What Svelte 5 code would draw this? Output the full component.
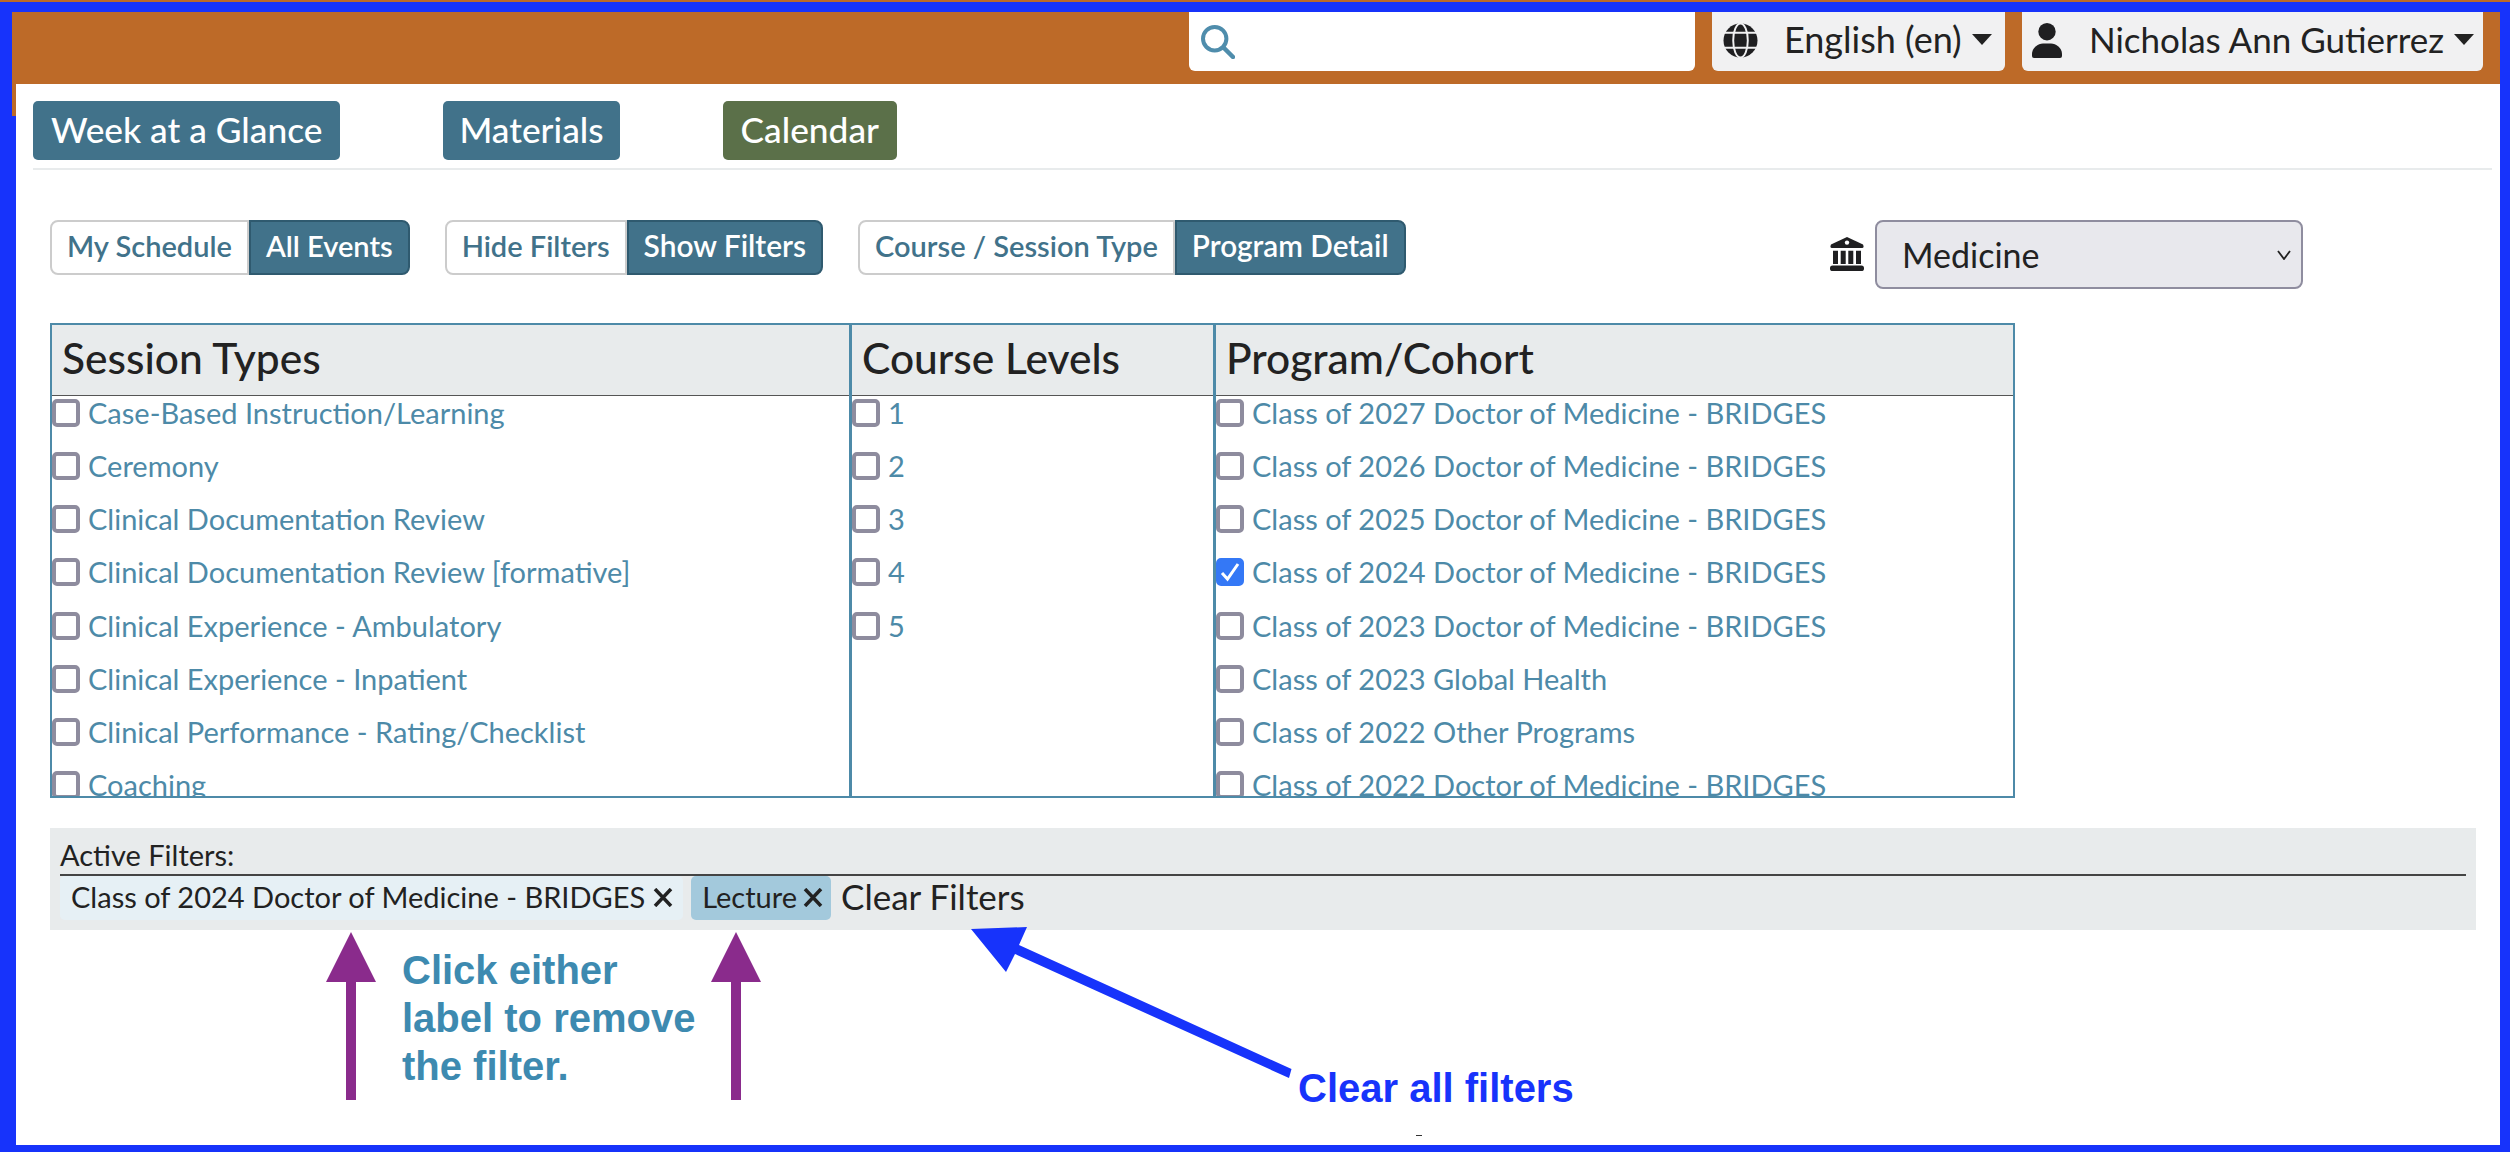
<script>
  const sessionTypes = [
    'Case-Based Instruction/Learning',
    'Ceremony',
    'Clinical Documentation Review',
    'Clinical Documentation Review [formative]',
    'Clinical Experience - Ambulatory',
    'Clinical Experience - Inpatient',
    'Clinical Performance - Rating/Checklist',
    'Coaching'
  ];
  const levels = ['1', '2', '3', '4', '5'];
  const cohorts = [
    'Class of 2027 Doctor of Medicine - BRIDGES',
    'Class of 2026 Doctor of Medicine - BRIDGES',
    'Class of 2025 Doctor of Medicine - BRIDGES',
    'Class of 2024 Doctor of Medicine - BRIDGES',
    'Class of 2023 Doctor of Medicine - BRIDGES',
    'Class of 2023 Global Health',
    'Class of 2022 Other Programs',
    'Class of 2022 Doctor of Medicine - BRIDGES'
  ];
  const columns = [
    { title: 'Session Types', items: sessionTypes },
    { title: 'Course Levels', items: levels },
    { title: 'Program/Cohort', items: cohorts }
  ];
  const toggles = [
    ['My Schedule', 'All Events'],
    ['Hide Filters', 'Show Filters'],
    ['Course / Session Type', 'Program Detail']
  ];
  const checked = 'Class of 2024 Doctor of Medicine - BRIDGES';
</script>

<div class="frame">
  <header class="topbar">
    <div class="search">
      <svg class="search-icon" viewBox="0 0 34 34" aria-hidden="true">
        <circle cx="13.7" cy="13.7" r="11.7" fill="none" stroke="#4f8dac" stroke-width="4" />
        <path d="M22.5 22.5 L32 32" stroke="#4f8dac" stroke-width="4.5" stroke-linecap="round" />
      </svg>
    </div>
    <button class="menu lang">
      <svg class="globe" viewBox="0 0 36 36" aria-hidden="true">
        <circle cx="18" cy="18" r="17.5" fill="#1f1f21" />
        <g fill="none" stroke="#f1f1f2" stroke-width="2">
          <ellipse cx="18" cy="18" rx="7.5" ry="17.5" />
          <path d="M0 10 H36 M0 25.5 H36" />
        </g>
      </svg>
      <span class="menu-text">English (en)</span>
      <span class="caret"></span>
    </button>
    <button class="menu user">
      <svg class="person" viewBox="0 0 30 35" aria-hidden="true">
        <circle cx="15" cy="8.7" r="8.7" fill="#1f1f21" />
        <path d="M0 33 V31 C0 25 6 20.5 11 20.5 H19 C24 20.5 30 25 30 31 V33 Q30 35 28 35 H2 Q0 35 0 33 Z" fill="#1f1f21" />
      </svg>
      <span class="menu-text">Nicholas Ann Gutierrez</span>
      <span class="caret"></span>
    </button>
  </header>

  <main class="page">
    <nav class="tabs">
      <button class="tab">Week at a Glance</button>
      <button class="tab slim">Materials</button>
      <button class="tab green">Calendar</button>
    </nav>
    <div class="divider"></div>

    <div class="toolbar">
      {#each toggles as pair}
        <div class="toggle">
          <button class="t-off">{pair[0]}</button>
          <button class="t-on">{pair[1]}</button>
        </div>
      {/each}
      <div class="school">
        <svg class="bank" viewBox="0 0 34 34" aria-hidden="true">
          <path d="M17 0 L33 7.5 Q34.5 11 32 11 H2 Q-0.5 11 1 7.5 Z" fill="#1f1f21" />
          <circle cx="17" cy="5.6" r="2.2" fill="#fff" />
          <path d="M3 13.7 H8 V27 H3 Z M10.7 13.7 H15.7 V27 H10.7 Z M18.3 13.7 H23.3 V27 H18.3 Z M26 13.7 H31 V27 H26 Z" fill="#1f1f21" />
          <rect x="0" y="28.4" width="34" height="5.6" rx="2.6" fill="#1f1f21" />
        </svg>
        <select class="school-select">
          <option>Medicine</option>
        </select>
      </div>
    </div>

    <section class="filters">
      {#each columns as col}
        <div class="col">
          <h3>{col.title}</h3>
          <ul>
            {#each col.items as item}
              <li>
                <input type="checkbox" checked={item === checked} />
                <span>{item}</span>
              </li>
            {/each}
          </ul>
        </div>
      {/each}
    </section>

    <section class="active">
      <div class="active-title">Active Filters:</div>
      <div class="chips">
        <span class="chip">Class of 2024 Doctor of Medicine - BRIDGES<svg class="x" viewBox="0 0 20 19" aria-hidden="true"><path d="M2 1 L18 18 M18 1 L2 18" /></svg></span>
        <span class="chip dark">Lecture<svg class="x" viewBox="0 0 20 19" aria-hidden="true"><path d="M2 1 L18 18 M18 1 L2 18" /></svg></span>
        <span class="clear">Clear Filters</span>
      </div>
    </section>
  </main>

  <svg class="arrows" viewBox="0 0 2510 1152" aria-hidden="true">
    <g fill="#8a2b8c">
      <path d="M351 932 L376 982 H356 V1100 H346 V982 H326 Z" />
      <path d="M736 932 L761 982 H741 V1100 H731 V982 H711 Z" />
    </g>
    <path d="M971 929 L1027 927 L1019 945 L1291.5 1069 L1289 1078 L1015 954 L1006 972 Z" fill="#1733fb" />
    <rect x="1416" y="1135" width="6" height="1" fill="#333" />
  </svg>
  <p class="note">Click either<br />label to remove<br />the filter.</p>
  <p class="note-blue">Clear all filters</p>
</div>

<style>
  :global(body) {
    margin: 0;
  }
  .frame {
    position: relative;
    box-sizing: border-box;
    width: 2510px;
    height: 1152px;
    padding: 12px 10px 7px 16px;
    background: #1733fb;
    overflow: hidden;
    font-family: "Lato", "Liberation Sans", sans-serif;
    display: flex;
    flex-direction: column;
  }
  .frame::before {
    content: "";
    position: absolute;
    left: 0;
    top: 0;
    right: 0;
    height: 2px;
    background: #bd6a28;
  }
  .frame::after {
    content: "";
    position: absolute;
    left: 12px;
    top: 84px;
    width: 4px;
    height: 32px;
    background: #bd6a28;
  }
  .topbar {
    height: 72px;
    margin-left: -4px;
    background: #bd6a28;
    display: flex;
    justify-content: flex-end;
    align-items: flex-start;
    gap: 17px;
    padding-right: 17px;
    flex: none;
  }
  .search {
    width: 506px;
    height: 59px;
    background: #fff;
    border-radius: 0 0 6px 6px;
    display: flex;
    align-items: center;
    padding-left: 12px;
    box-sizing: border-box;
  }
  .search-icon {
    width: 34px;
    height: 34px;
    margin-top: 1px;
  }
  .menu {
    height: 59px;
    background: #f1f1f2;
    border: 0;
    border-radius: 0 0 6px 6px;
    display: flex;
    align-items: center;
    padding: 0;
    font-family: inherit;
    color: #222;
    box-sizing: border-box;
  }
  .lang {
    width: 293px;
    padding-left: 11px;
    font-size: 36px;
  }
  .user {
    width: 461px;
    padding-left: 10px;
    font-size: 35px;
  }
  .globe {
    width: 35px;
    height: 35px;
    margin-right: 26px;
    margin-top: -2px;
  }
  .person {
    width: 30px;
    height: 35px;
    margin-right: 27px;
    margin-top: -2px;
  }
  .menu-text {
    white-space: nowrap;
    margin-top: -6px;
  }
  .caret {
    width: 0;
    height: 0;
    border-left: 10px solid transparent;
    border-right: 10px solid transparent;
    border-top: 11px solid #222;
    margin-left: 10px;
    margin-top: -4px;
  }
  .page {
    flex: 1;
    background: #fff;
    min-height: 0;
    display: flex;
    flex-direction: column;
  }
  .tabs {
    display: flex;
    gap: 103px;
    padding: 17px 0 0 17px;
  }
  .tab {
    height: 59px;
    padding: 0 18px 2px;
    border: 0;
    border-radius: 5px;
    background: #41728a;
    color: #fff;
    font-family: inherit;
    font-size: 35.3px;
    font-weight: 500;
  }
  .slim {
    padding: 0 16px 2px;
  }
  .green {
    background: #5b7049;
  }
  .divider {
    height: 2px;
    background: #e8ebec;
    margin: 8px 8px 0 17px;
  }
  .toolbar {
    display: flex;
    align-items: flex-start;
    gap: 35px;
    margin: 50px 0 0 34px;
  }
  .toggle {
    display: flex;
    height: 55px;
  }
  .toggle button {
    box-sizing: border-box;
    height: 55px;
    padding: 0 15px 5px;
    font-family: inherit;
    font-size: 29px;
    font-weight: 600;
    white-space: nowrap;
  }
  .toggle:nth-child(2) .t-on {
    font-size: 29.9px;
  }
  .toggle:nth-child(3) .t-on {
    font-size: 29.7px;
  }
  .t-off {
    background: #fff;
    color: #41728a;
    border: 2px solid #ccc;
    border-radius: 8px 0 0 8px;
  }
  .t-on {
    background: #41728a;
    color: #fff;
    border: 2px solid #2f5a6f;
    border-radius: 0 8px 8px 0;
  }
  .school {
    display: flex;
    align-items: flex-start;
    gap: 11px;
    margin-left: auto;
    margin-right: 197px;
  }
  .bank {
    width: 34px;
    height: 34px;
    margin-top: 17px;
  }
  .school-select {
    appearance: none;
    width: 428px;
    height: 69px;
    box-sizing: border-box;
    padding-left: 25px;
    border: 2px solid #8f8d9f;
    border-radius: 8px;
    background: #e8e8ed url("data:image/svg+xml,%3Csvg xmlns='http://www.w3.org/2000/svg' viewBox='0 0 14 10'%3E%3Cpath d='M1 1 L7 9 L13 1' fill='none' stroke='%23222' stroke-width='1.8'/%3E%3C/svg%3E") right 10px center / 14px 10px no-repeat;
    color: #222;
    font-family: inherit;
    font-size: 34px;
  }
  .filters {
    display: grid;
    grid-template-columns: 797px 364px 800px;
    box-sizing: border-box;
    width: 1965px;
    height: 475px;
    margin: 34px 0 0 34px;
    border: 2px solid #4d8aa8;
    overflow: hidden;
  }
  .col {
    min-width: 0;
    overflow: hidden;
  }
  .col + .col {
    border-left: 3px solid #4d8aa8;
  }
  h3 {
    margin: 0;
    box-sizing: border-box;
    height: 71px;
    padding: 0 0 0 10px;
    line-height: 66px;
    font-size: 42.5px;
    font-weight: 500;
    color: #222;
    background: #e8ebec;
    border-bottom: 1px solid #555;
  }
  ul {
    list-style: none;
    margin: 0;
    padding: 3px 0 0;
  }
  li {
    display: flex;
    align-items: flex-start;
    gap: 8px;
    height: 53.15px;
    font-size: 29px;
    line-height: 27px;
    color: #4d8aa8;
    white-space: nowrap;
  }
  input[type="checkbox"] {
    appearance: none;
    box-sizing: border-box;
    width: 28px;
    height: 28px;
    margin: 0;
    flex: none;
    border: 4px solid #8e8c9e;
    border-radius: 5px;
    background: #fff;
  }
  input[type="checkbox"]:checked {
    border-color: #3478f6;
    background: #3478f6 url("data:image/svg+xml,%3Csvg xmlns='http://www.w3.org/2000/svg' viewBox='0 0 20 20'%3E%3Cpath d='M2 11 L7.5 17 L18 2' fill='none' stroke='white' stroke-width='3'/%3E%3C/svg%3E") center / 100% no-repeat;
  }
  .active {
    box-sizing: border-box;
    width: 2426px;
    height: 102px;
    margin: 30px 0 0 34px;
    padding: 0 10px;
    background: #e8ebec;
  }
  .active-title {
    height: 48px;
    box-sizing: border-box;
    padding-top: 12px;
    font-size: 29px;
    line-height: 30px;
    color: #222;
    border-bottom: 2px solid #444;
  }
  .chips {
    display: flex;
    align-items: center;
    gap: 8px;
  }
  .chip {
    display: flex;
    align-items: center;
    gap: 8px;
    box-sizing: border-box;
    height: 44px;
    padding: 0 10px 2px 11px;
    border-radius: 5px;
    background: #e6f0f5;
    font-size: 29px;
    line-height: 40px;
    color: #222;
    white-space: nowrap;
  }
  .x {
    width: 20px;
    height: 19px;
    fill: none;
    stroke: #222;
    stroke-width: 3.5;
  }
  .dark {
    gap: 6px;
    padding-right: 8px;
    background: #a3c9dc;
  }
  .clear {
    margin-left: 2px;
    margin-top: -4px;
    font-size: 35px;
    color: #222;
  }
  .arrows {
    position: absolute;
    inset: 0;
    width: 2510px;
    height: 1152px;
    pointer-events: none;
  }
  .note {
    position: absolute;
    left: 402px;
    top: 946px;
    margin: 0;
    font-family: "Liberation Sans", Arial, sans-serif;
    font-weight: 700;
    font-size: 40px;
    line-height: 48px;
    color: #3d8ab0;
  }
  .note-blue {
    position: absolute;
    left: 1298px;
    top: 1065px;
    margin: 0;
    font-family: "Liberation Sans", Arial, sans-serif;
    font-weight: 700;
    font-size: 40px;
    line-height: 46px;
    color: #1733fb;
    white-space: nowrap;
  }
</style>
